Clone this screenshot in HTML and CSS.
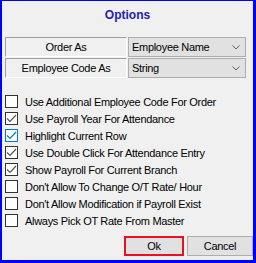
FILE: index.html
```html
<!DOCTYPE html>
<html lang="en">
<head>
  <meta charset="UTF-8">
  <title>Options</title>
  <link rel="stylesheet" href="styles.css">
</head>
<body>
  <div class="window">
    <h1 class="title">Options</h1>

    <div class="settings">
      <div class="label">Order As</div>
      <div class="combo">
        <span>Employee Name</span>
        <svg class="chev" width="8" height="5" viewBox="0 0 8 5"><path d="M0.5 0.5 L4 4 L7.5 0.5" fill="none" stroke="#606060" stroke-width="1"/></svg>
      </div>
      <div class="label">Employee Code As</div>
      <div class="combo">
        <span>String</span>
        <svg class="chev" width="8" height="5" viewBox="0 0 8 5"><path d="M0.5 0.5 L4 4 L7.5 0.5" fill="none" stroke="#606060" stroke-width="1"/></svg>
      </div>
    </div>

    <ul class="checks">
      <li><span class="box"></span>Use Additional Employee Code For Order</li>
      <li><span class="box checked"><svg width="11" height="11" viewBox="0 0 11 11"><path d="M1 5.5 L4 8.5 L10 2" fill="none" stroke="#555" stroke-width="1.2"/></svg></span>Use Payroll Year For Attendance</li>
      <li><span class="box checked focus"><svg width="11" height="11" viewBox="0 0 11 11"><path d="M1 5.5 L4 8.5 L10 2" fill="none" stroke="#0078d7" stroke-width="1.2"/></svg></span>Highlight Current Row</li>
      <li><span class="box checked"><svg width="11" height="11" viewBox="0 0 11 11"><path d="M1 5.5 L4 8.5 L10 2" fill="none" stroke="#555" stroke-width="1.2"/></svg></span>Use Double Click For Attendance Entry</li>
      <li><span class="box checked"><svg width="11" height="11" viewBox="0 0 11 11"><path d="M1 5.5 L4 8.5 L10 2" fill="none" stroke="#555" stroke-width="1.2"/></svg></span>Show Payroll For Current Branch</li>
      <li><span class="box"></span>Don't Allow To Change O/T Rate/ Hour</li>
      <li><span class="box"></span>Don't Allow Modification if Payroll Exist</li>
      <li><span class="box"></span>Always Pick OT Rate From Master</li>
    </ul>

    <div class="buttons">
      <button class="btn ok">Ok</button>
      <button class="btn">Cancel</button>
    </div>
  </div>
</body>
</html>
```

FILE: styles.css
```css
body {
  margin: 0;
  padding: 0;
  background: #fff;
  font-family: "Liberation Sans", Arial, sans-serif;
  font-size: 11px;
  letter-spacing: -0.3px;
  color: #000;
}

.window {
  box-sizing: border-box;
  width: 256px;
  height: 263px;
  background: #f0f0f0;
  border-style: solid;
  border-color: #0000ff;
  border-width: 1px 3px 3px 2px;
  display: flex;
  flex-direction: column;
}

.title {
  margin: 0;
  height: 36px;
  padding-top: 7px;
  box-sizing: border-box;
  text-align: center;
  font-size: 12px;
  font-weight: bold;
  letter-spacing: 0;
  color: #2222aa;
}

.settings {
  display: grid;
  grid-template-columns: 122px 118px;
  grid-auto-rows: 20px;
  column-gap: 1px;
  row-gap: 1px;
  margin-left: 3px;
}

.label {
  box-sizing: border-box;
  border-top: 1px solid #a0a0a0;
  border-left: 1px solid #a0a0a0;
  border-bottom: 1px solid #fff;
  border-right: 1px solid #fff;
  display: flex;
  align-items: center;
  justify-content: center;
}

.combo {
  box-sizing: border-box;
  border: 1px solid #adadad;
  background: #e1e1e1;
  display: flex;
  align-items: center;
  justify-content: space-between;
  padding: 0 5px 0 3px;
}

.checks {
  list-style: none;
  margin: 15px 0 0 3px;
  padding: 0;
}

.checks li {
  height: 17px;
  display: flex;
  align-items: center;
}

.box {
  box-sizing: border-box;
  width: 13px;
  height: 13px;
  border: 1px solid #333;
  background: #fff;
  margin-right: 7px;
  display: flex;
  align-items: center;
  justify-content: center;
}

.box.focus {
  border-color: #0078d7;
}

.buttons {
  display: flex;
  justify-content: flex-end;
  align-items: center;
  gap: 3px;
  margin-top: auto;
  padding: 0 0 4px 0;
}

.btn {
  box-sizing: border-box;
  height: 20px;
  width: 66px;
  background: #e1e1e1;
  border: 1px solid #adadad;
  font-family: "Liberation Sans", Arial, sans-serif;
  font-size: 11px;
  letter-spacing: -0.3px;
  color: #000;
  padding: 0;
}

.btn.ok {
  width: 60px;
  border: 2px solid #e81123;
}
```
